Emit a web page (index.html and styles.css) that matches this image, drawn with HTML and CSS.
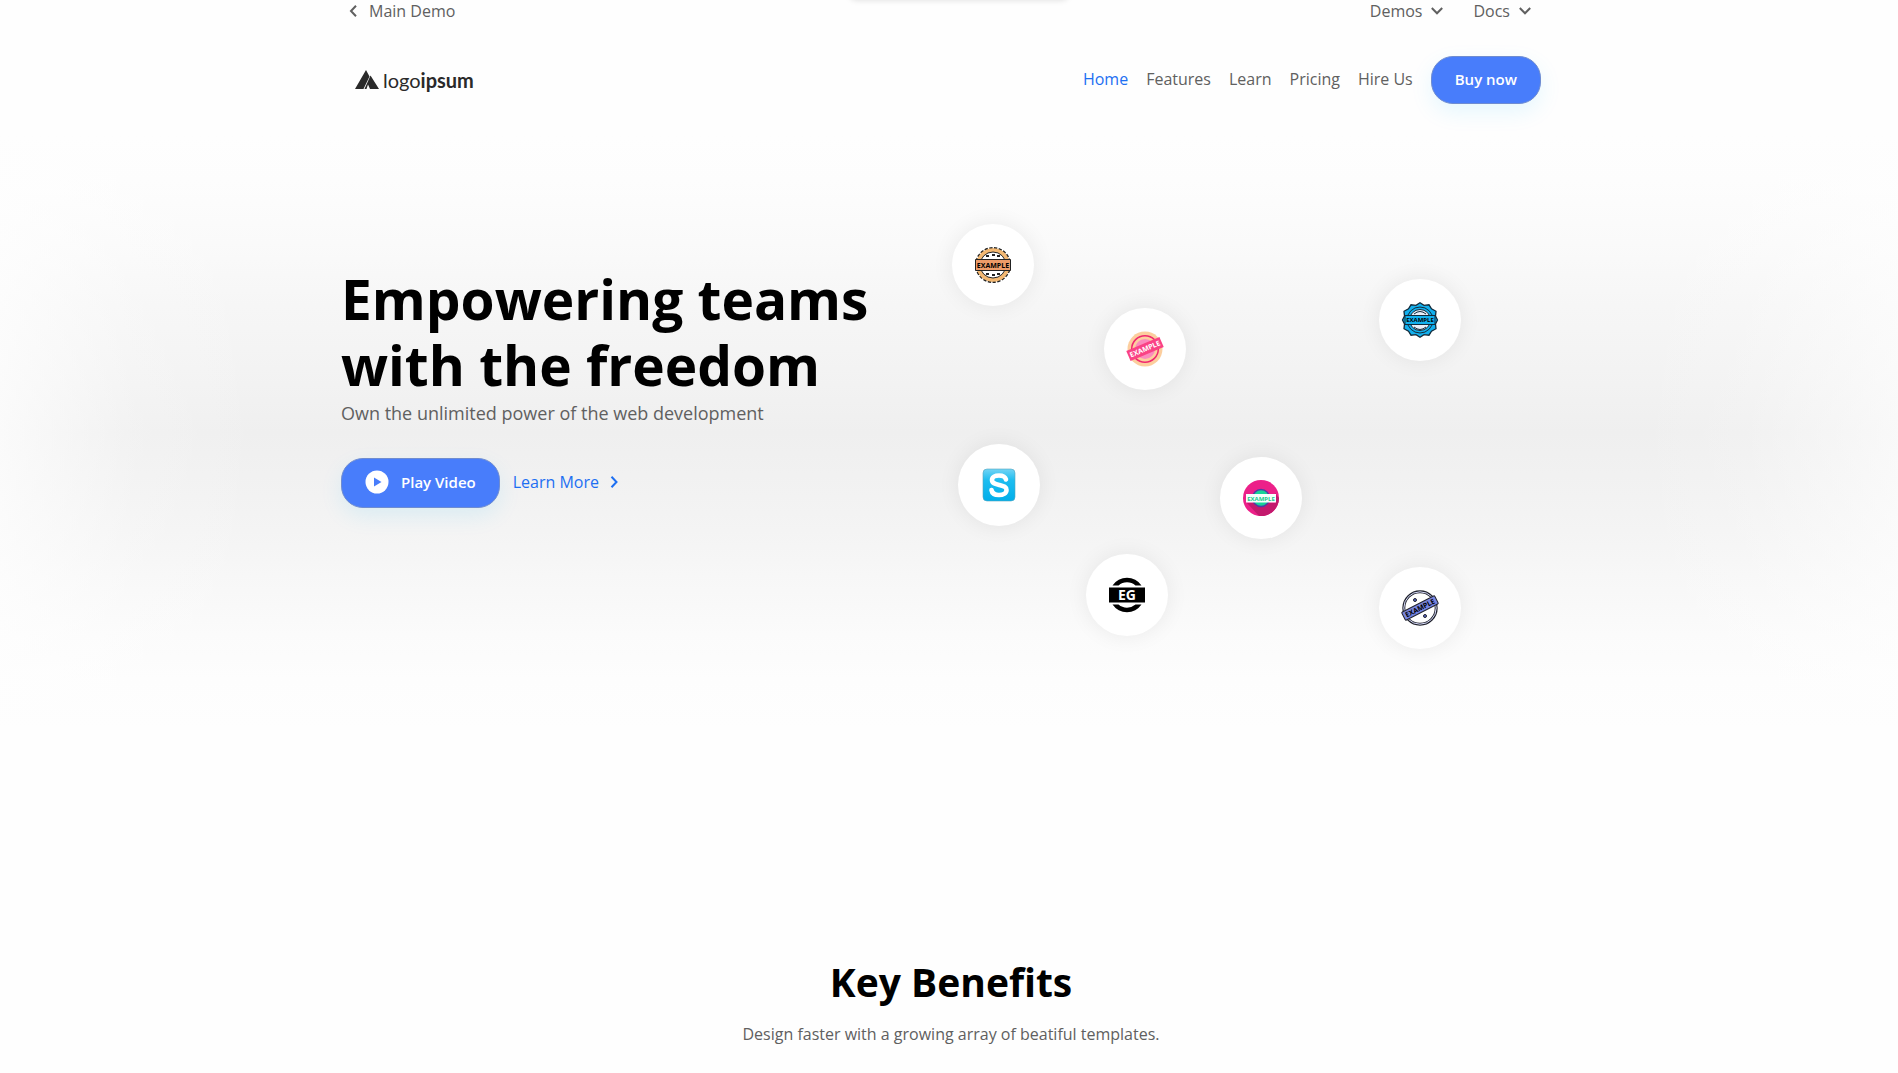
FILE: index.html
```html
<!DOCTYPE html>
<html lang="en">
<head>
<meta charset="utf-8">
<title>Logoipsum</title>
<meta name="viewport" content="width=device-width, initial-scale=1">
<link rel="stylesheet" href="styles.css">
</head>
<body>
<div class="peek" aria-hidden="true"></div>
<header class="container">
  <nav class="topbar" aria-label="Demos">
    <a class="top-link" href="#"><svg class="chev" viewBox="0 0 12 12"><path d="M8 .8 3 6 8 11.200"/></svg>Main Demo</a>
    <div class="top-menus">
      <a class="top-link" href="#">Demos<svg class="chev" viewBox="0 0 12 12"><path d="M.8 3 6 8.300 11.200 3"/></svg></a>
      <a class="top-link" href="#">Docs<svg class="chev" viewBox="0 0 12 12"><path d="M.8 3 6 8.300 11.200 3"/></svg></a>
    </div>
  </nav>
  <div class="navbar">
    <a class="logo" href="#">
      <svg class="logo-mark" viewBox="0 0 24 20"><path d="M11 0 14.500 6.500 8.500 19H0ZM15.500 5.500 24 19H15L13 14.500 11.500 19H9.500Z"/></svg>
      <span>logo<b>ipsum</b></span>
    </a>
    <nav class="links" aria-label="Main">
      <a class="active" href="#">Home</a>
      <a href="#">Features</a>
      <a href="#">Learn</a>
      <a href="#">Pricing</a>
      <a href="#">Hire Us</a>
      <button class="btn btn-buy" type="button">Buy now</button>
    </nav>
  </div>
</header>
<main>
  <section class="hero">
    <div class="container hero-grid">
      <div class="hero-copy">
        <h1>Empowering teams with the freedom</h1>
        <p>Own the unlimited power of the web development</p>
        <div class="actions">
          <button class="btn btn-play" type="button"><svg class="play" viewBox="0 0 24 24"><circle cx="12" cy="12" r="11.500" fill="#fff"/><path d="M9 7.500 16.500 12 9 16.500Z" fill="#487dfb"/></svg>Play Video</button>
          <a class="more" href="#">Learn More<svg class="chev" viewBox="0 0 12 12"><path d="M3.500 .8 8.500 6 3.500 11.200"/></svg></a>
        </div>
      </div>
      <div class="cloud">
        <span class="bubble b1"><svg viewBox="0 0 36 36"><circle cx="18" cy="18" r="16.500" fill="#f3b872" stroke="#222" stroke-width="3" stroke-dasharray="3.200 1.400"/><circle cx="18" cy="18" r="16.800" fill="#f3b872"/><circle cx="18" cy="18" r="13" fill="#fff" stroke="#222"/><path d="M11 8h3v2h-3zM17 7h3v2h-3zM22 8h3v2h-3zM11 26h3v2h-3zM17 27h3v2h-3zM22 26h3v2h-3z" fill="#222"/><path d="M.5 12.500h35v11H.5z" fill="#ed9b68" stroke="#222"/><text x="18" y="20.500" class="stamp s7">EXAMPLE</text></svg></span>
        <span class="bubble b2"><svg viewBox="0 0 36 36"><circle cx="18" cy="18" r="17.500" fill="#fcce9e"/><circle cx="18" cy="18" r="13.300" fill="#fcce9e" stroke="#f0266f" stroke-width="1.500"/><circle cx="18" cy="18" r="10" fill="#fb8bbd"/><g transform="rotate(-23 18 18)"><path d="M0 12.500h36v11H0z" fill="#fa4285"/><text x="18" y="20.500" class="stamp s7" fill="#fff">EXAMPLE</text></g></svg></span>
        <span class="bubble b3"><svg viewBox="0 0 36 36"><path d="M18 .8l4 2.600 5-.6 2.500 4 4.500 2.500-.5 4.700 2 4-2 4 .5 4.700-4.500 2.500-2.500 4-5-.6-4 2.600-4-2.600-5 .6-2.500-4-4.500-2.500.5-4.700-2-4 2-4-.5-4.700 4.500-2.500 2.500-4 5 .6Z" fill="#12b0ee" stroke="#132b3b" stroke-width="1.300"/><circle cx="18" cy="18" r="13" fill="#12b0ee" stroke="#132b3b"/><circle cx="18" cy="18" r="10.500" fill="#e8effa" stroke="#132b3b"/><path d="M12 12Q18 7 24 12M12 25q6 5 12 0" fill="none" stroke="#132b3b"/><path d="M3 13.500h30v9H3z" fill="#12b0ee" stroke="#132b3b"/><text x="18" y="20.200" class="stamp s6">EXAMPLE</text></svg></span>
        <span class="bubble b4"><svg viewBox="0 0 36 36"><defs><linearGradient id="sky" x1="0" y1="0" x2="0" y2="1"><stop offset="0" stop-color="#72d4f5"/><stop offset=".35" stop-color="#1dbdf0"/><stop offset="1" stop-color="#00aeea"/></linearGradient></defs><rect x="2" y="2" width="32" height="32" rx="4" fill="url(#sky)" stroke="#56a5bd" stroke-width=".6"/><path d="M25 12.500C24 9 21.500 8.500 18 8.500c-4 0-7 1.500-7 4.500 0 3.500 3.500 4 7.500 5s7 1.500 7 5-3.500 5-7.500 5c-4.500 0-7-2-7.500-5" fill="none" stroke="#fff" stroke-width="4.600" stroke-linecap="round"/></svg></span>
        <span class="bubble b5"><svg viewBox="0 0 36 36"><circle cx="18" cy="18" r="18" fill="#ec2089"/><path d="M4 23 16 35.900A18 18 0 0 0 36 18L32 13v10Z" fill="#c3196d"/><circle cx="18" cy="18" r="8.500" fill="#17d298" stroke="#4f3ca5" stroke-width="1.500"/><path d="M3 14h30v8.500H3z" fill="#f5fffc"/><text x="18" y="20.500" class="stamp s6" fill="#14c98b">EXAMPLE</text></svg></span>
        <span class="bubble b6"><svg viewBox="0 0 36 36"><path d="M3.500 8.500a17.500 17.500 0 0 1 29 0h-6a13 13 0 0 0-17 0ZM3.500 27.500a17.500 17.500 0 0 0 29 0h-6a13 13 0 0 1-17 0ZM0 10.500h36v15H0z"/><text x="18" y="23" class="stamp s14" fill="#fff">EG</text></svg></span>
        <span class="bubble b7"><svg viewBox="0 0 36 36"><circle cx="18" cy="18" r="16.200" fill="#fff" stroke="#22242e" stroke-width="3"/><circle cx="18" cy="18" r="16.200" fill="none" stroke="#d6dafa"/><circle cx="13" cy="10" r="1.500" fill="#5a68c8" stroke="#22242e"/><circle cx="23" cy="26" r="1.500" fill="#5a68c8" stroke="#22242e"/><g transform="rotate(-27 18 18)"><rect x="-.5" y="13.500" width="37" height="9" rx="1" fill="#7785e2" stroke="#22242e"/><text x="18" y="20.500" class="stamp s7">EXAMPLE</text></g></svg></span>
      </div>
    </div>
  </section>
  <section class="benefits">
    <h2>Key Benefits</h2>
    <p>Design faster with a growing array of beatiful templates.</p>
  </section>
</main>
</body>
</html>
```
FILE: styles.css
```css
* { box-sizing: border-box; }
body {
  margin: 0;
  padding-right: 16px;
  background: #fefefe;
  color: #606060;
  font: 400 16px/22px "Open Sans", "Noto Sans", sans-serif;
  overflow-x: hidden;
}
a { color: inherit; text-decoration: none; }
.container { max-width: 1200px; margin: 0 auto; }
.peek {
  position: absolute;
  top: -20px;
  left: 50%;
  width: 220px;
  height: 20px;
  margin-left: -100px;
  border-radius: 8px;
  box-shadow: 0 0 6px rgba(0, 0, 0, .14);
}
.topbar { display: flex; justify-content: space-between; padding: 0 10px 0 7px; }
.top-menus { display: flex; gap: 30px; }
.top-link { display: flex; align-items: center; gap: 9px; }
.chev { width: 12px; height: 12px; fill: none; stroke: currentColor; stroke-width: 2; }
.navbar { display: flex; align-items: center; justify-content: space-between; padding: 34px 0 0 14px; }
.logo { display: flex; align-items: center; gap: 4px; color: #2a2a2a; font: 20px/24px Lato, sans-serif; }
.logo-mark { width: 24px; height: 20px; fill: currentColor; }
.links { display: flex; align-items: center; gap: 18px; }
.links a { padding-bottom: 2px; }
.active, .more { color: #1d6ff2; }
.btn {
  display: flex;
  align-items: center;
  justify-content: center;
  border: 1px solid #6f8cd0;
  border-radius: 22px;
  background: #487dfb;
  color: #fff;
  font: inherit;
  font-size: 15px;
  font-weight: 600;
  box-shadow: 0 8px 22px rgba(0, 190, 255, .1);
}
.btn-buy { height: 48px; padding: 0 23px 2px; }
.hero {
  height: 632px;
  margin-right: -16px;
  padding-right: 16px;
  background:
    linear-gradient(90deg,
      rgba(254, 254, 254, .75) 0, rgba(254, 254, 254, .5) 3%,
      rgba(254, 254, 254, .18) 7%, rgba(254, 254, 254, 0) 14%,
      rgba(254, 254, 254, 0) 86%, rgba(254, 254, 254, .15) 92%,
      rgba(254, 254, 254, .45) 97%, rgba(254, 254, 254, .65) 100%),
    linear-gradient(#fefefe 5%, #fdfdfd 12%, #fafafa 22%, #f6f6f6 32%,
      #f3f3f3 42%, #efefef 52%, #f2f2f2 62%, #f5f5f5 70%,
      #f8f8f8 77%, #fbfbfb 84%, #fdfdfd 91%, #fefefe 99%);
}
.hero-grid { display: grid; grid-template-columns: 600px 1fr; }
.hero-copy { padding-top: 162px; }
h1 { max-width: 560px; margin: 0; color: #000; font-size: 55px; line-height: 66px; font-weight: 700; }
.hero-copy p { margin: 0; font-size: 18px; line-height: 30px; font-weight: 400; }
.actions { display: flex; align-items: center; gap: 13px; margin-top: 30px; }
.btn-play { height: 50px; padding: 0 23px 2px; gap: 12px; }
.play { width: 24px; height: 24px; }
.more { display: flex; align-items: center; gap: 9px; padding-bottom: 2px; font-weight: 500; }
.cloud { position: relative; height: 550px; }
.bubble {
  position: absolute;
  display: flex;
  align-items: center;
  justify-content: center;
  width: 82px;
  height: 82px;
  border-radius: 50%;
  background: #fff;
  box-shadow: 0 0 22px rgba(0, 0, 0, .07);
}
.bubble svg { width: 36px; height: 36px; overflow: visible; }
.b1 { left: 11px; top: 120px; }
.b2 { left: 163px; top: 204px; }
.b3 { left: 438px; top: 175px; }
.b4 { left: 17px; top: 340px; }
.b5 { left: 279px; top: 353px; }
.b6 { left: 145px; top: 450px; }
.b7 { left: 438px; top: 463px; }
.stamp { font-family: "Open Sans", sans-serif; font-weight: 700; text-anchor: middle; }
.s6 { font-size: 6px; }
.s7 { font-size: 7px; }
.s14 { font-size: 14px; }
.benefits { padding: 218px 0 24px 20px; text-align: center; }
h2 { margin: 0; color: #000; font-size: 39px; line-height: 56px; font-weight: 700; }
.benefits p { margin: 13px 0 0; }
```
